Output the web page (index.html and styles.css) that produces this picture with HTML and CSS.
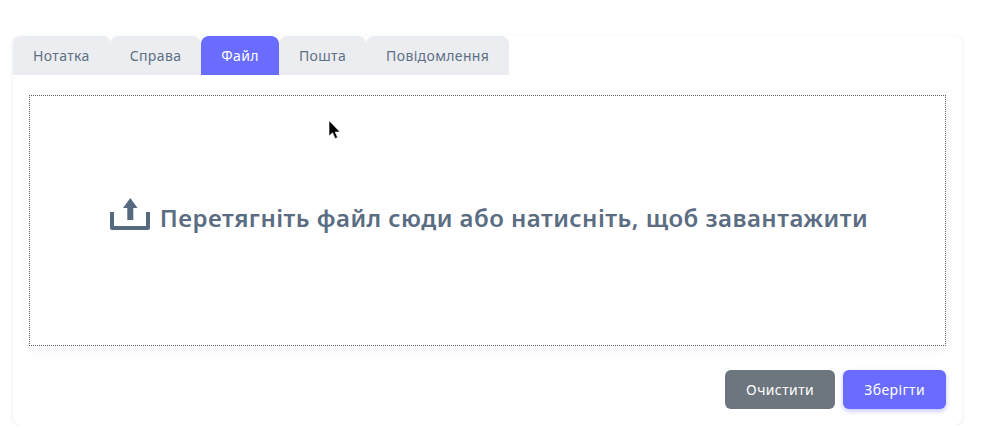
FILE: index.html
```html
<!DOCTYPE html>
<html lang="uk">
<head>
  <meta charset="UTF-8">
  <meta name="viewport" content="width=device-width, initial-scale=1.0">
  <title>Файл</title>
  <link rel="stylesheet" href="styles.css">
</head>
<body>
  <div class="card">
    <div class="tabs">
      <a href="#" class="tab">Нотатка</a>
      <a href="#" class="tab">Справа</a>
      <a href="#" class="tab active">Файл</a>
      <a href="#" class="tab">Пошта</a>
      <a href="#" class="tab">Повідомлення</a>
    </div>
    <div class="card-body">
      <div class="dropzone">
        <svg class="upload-icon" viewBox="0 0 42 33" width="42" height="33" aria-hidden="true">
          <path d="M21.3 0 L28.5 10 H24.3 V22 H18.3 V10 H14 Z" />
          <path d="M1 14 H5 V28 H37 V14 H41 V29.5 Q41 32 38.5 32 H3.5 Q1 32 1 29.5 Z" />
        </svg>
        <span class="dropzone-text">Перетягніть файл сюди або натисніть, щоб завантажити</span>
      </div>
      <div class="actions">
        <button class="btn btn-clear">Очистити</button>
        <button class="btn btn-save">Зберігти</button>
      </div>
    </div>
    <svg class="cursor" viewBox="0 0 14 20" width="14" height="20" aria-hidden="true">
      <path d="M1 0.5 V16 L4.6 12.8 L7 18.6 L9.6 17.5 L7.2 12 H12 Z" />
    </svg>
  </div>
</body>
</html>
```
FILE: styles.css
```css
body {
  margin: 0;
  padding: 36px 31px 0 13px;
  background-color: #fff;
  font-family: "Noto Sans", sans-serif;
  overflow: hidden;
}
.card {
  position: relative;
  height: 389px;
  box-sizing: border-box;
  background-color: #fff;
  border-radius: 8px;
  box-shadow: 0 1px 4px rgba(60, 70, 100, 0.12);
}
.tabs {
  display: flex;
  height: 39px;
}
.tab {
  display: flex;
  align-items: center;
  padding: 0 20px;
  font-size: 14px;
  letter-spacing: 0.36px;
  color: #5f7084;
  background-color: #ebedf1;
  border-radius: 8px 8px 0 0;
  text-decoration: none;
}
.tab:first-child {
  border-top-right-radius: 6px;
}
.tab.active {
  background-color: #696cff;
  color: #fff;
}
.card-body {
  padding: 20px 16px 16px;
}
.dropzone {
  display: flex;
  align-items: center;
  justify-content: center;
  gap: 9px;
  height: 251px;
  box-sizing: border-box;
  padding-left: 2px;
  padding-bottom: 7px;
  border: 1px dotted #5d6068;
  box-shadow: 0 4px 10px rgba(105, 108, 160, 0.06);
}
.upload-icon {
  fill: #566a7f;
  flex-shrink: 0;
  margin-bottom: 6px;
}
.dropzone-text {
  font-size: 24px;
  font-weight: 600;
  letter-spacing: 0.46px;
  color: #5a6d82;
}
.actions {
  display: flex;
  justify-content: flex-end;
  gap: 8px;
  margin-top: 24px;
}
.btn {
  height: 39px;
  padding: 0 21px 1px;
  border: none;
  border-radius: 6px;
  font-family: inherit;
  font-size: 14px;
  letter-spacing: 0.4px;
  color: #fff;
  cursor: pointer;
}
.btn-clear {
  background-color: #6d757e;
}
.btn-save {
  background-color: #696cff;
  box-shadow: 0 2px 5px rgba(105, 108, 255, 0.4);
}
.cursor {
  position: absolute;
  left: 315px;
  top: 84px;
  fill: #000;
  stroke: #fff;
  stroke-width: 0.6;
}
```
